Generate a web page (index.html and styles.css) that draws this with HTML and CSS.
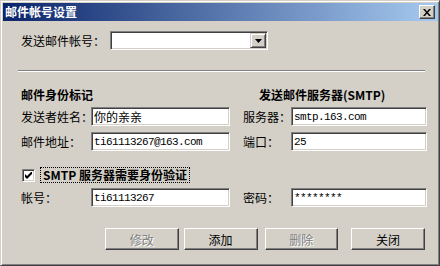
FILE: index.html
```html
<!DOCTYPE html>
<html lang="zh-CN">
<head>
    <meta charset="UTF-8">
    <title>邮件帐号设置</title>
    <link rel="stylesheet" href="styles.css">
</head>
<body>
    <div class="window">
        <!-- Title bar -->
        <div class="titlebar">
            <span class="title">邮件帐号设置</span>
            <button class="close-btn" type="button">
                <svg width="8" height="7" viewBox="0 0 8 7">
                    <path d="M0 0h2l2 2.5L6 0h2L5 3.5 8 7H6L4 4.5 2 7H0l3-3.5z" fill="#000"/>
                </svg>
            </button>
        </div>

        <div class="content">
            <div class="account-row">
                <label class="account-label">发送邮件帐号：</label>
                <div class="combo">
                    <div class="combo-text"></div>
                    <div class="combo-btn">
                        <svg width="7" height="4" viewBox="0 0 7 4"><path d="M0 0h7L3.5 4z" fill="#000"/></svg>
                    </div>
                </div>
            </div>

            <div class="separator"></div>

            <!-- Identity / SMTP server -->
            <div class="headings">
                <div class="heading heading-left">邮件身份标记</div>
                <div class="heading heading-right">发送邮件服务器(SMTP)</div>
            </div>

            <div class="row">
                <div class="field">
                    <label class="label-left">发送者姓名：</label>
                    <input class="input input-left cjk" type="text" value="你的亲亲">
                </div>
                <div class="field field-right">
                    <label class="label-right">服务器：</label>
                    <input class="input input-right" type="text" value="smtp.163.com">
                </div>
            </div>

            <div class="row">
                <div class="field">
                    <label class="label-left">邮件地址：</label>
                    <input class="input input-left" type="text" value="ti61113267@163.com">
                </div>
                <div class="field field-right">
                    <label class="label-right">端口：</label>
                    <input class="input input-right" type="text" value="25">
                </div>
            </div>

            <div class="check-row">
                <span class="checkbox">
                    <svg width="7" height="7" viewBox="0 0 7 7"><path d="M0 2v3l2 2 5-5V-1L2 4z" fill="#000"/></svg>
                </span>
                <span class="check-label">SMTP 服务器需要身份验证</span>
            </div>

            <div class="row row-auth">
                <div class="field">
                    <label class="label-left">帐号：</label>
                    <input class="input input-left" type="text" value="ti61113267">
                </div>
                <div class="field field-right">
                    <label class="label-right">密码：</label>
                    <input class="input input-right" type="text" value="********">
                </div>
            </div>

            <div class="buttons">
                <button class="button" type="button" disabled>修改</button>
                <button class="button" type="button">添加</button>
                <button class="button btn-del" type="button" disabled>删除</button>
                <button class="button btn-close" type="button">关闭</button>
            </div>
        </div>
    </div>
</body>
</html>
```

FILE: styles.css
```css
body {
    margin: 0;
    padding: 0;
    background: #d4d0c8;
    font-family: "Noto Sans CJK SC", "Liberation Sans", sans-serif;
    font-size: 12px;
    line-height: 16px;
    color: #000;
}

.window {
    width: 440px;
    height: 266px;
    box-sizing: border-box;
    background: #d4d0c8;
    border: 1px solid;
    border-color: #d4d0c8 #404040 #404040 #d4d0c8;
    box-shadow: inset 1px 1px #fff, inset -1px -1px #808080;
    padding: 2px 1px 2px 2px;
}

.titlebar {
    height: 18px;
    display: flex;
    align-items: center;
    justify-content: space-between;
    padding: 0 3px 0 2px;
    background: linear-gradient(to right, #0a246a, #a6caf0);
}

.title {
    color: #fff;
    font-weight: bold;
    font-size: 12px;
    line-height: 14px;
}

.close-btn {
    width: 16px;
    height: 14px;
    padding: 0;
    display: flex;
    align-items: center;
    justify-content: center;
    background: #d4d0c8;
    border: 1px solid;
    border-color: #fff #404040 #404040 #fff;
    box-shadow: inset -1px -1px #808080;
}

.content {
    padding: 10px 13px 0 15px;
}

.account-row {
    display: flex;
    align-items: center;
    padding-left: 3px;
}

label {
    flex-shrink: 0;
    white-space: nowrap;
}

.account-label {
    width: 89px;
}

.combo {
    width: 158px;
    height: 19px;
    box-sizing: border-box;
    display: flex;
    background: #fff;
    border: 1px solid;
    border-color: #808080 #fff #fff #808080;
    box-shadow: inset 1px 1px #404040, inset -1px -1px #d4d0c8;
    padding: 2px 1px 1px 2px;
}

.combo-text {
    flex: 1;
}

.combo-btn {
    width: 16px;
    height: 15px;
    margin-top: -1px;
    box-sizing: border-box;
    display: flex;
    align-items: center;
    justify-content: center;
    background: #d4d0c8;
    border: 1px solid;
    border-color: #d4d0c8 #404040 #404040 #d4d0c8;
    box-shadow: inset 1px 1px #fff, inset -1px -1px #808080;
}

.separator {
    margin-top: 20px;
    border-top: 1px solid #808080;
    border-bottom: 1px solid #fff;
}

.headings {
    display: flex;
    margin-top: 16px;
    padding-left: 3px;
    font-weight: bold;
    line-height: 14px;
}

.heading-left {
    width: 238px;
}

.row {
    display: flex;
    align-items: center;
    height: 19px;
    margin-top: 6px;
    padding-left: 3px;
}

.headings + .row {
    margin-top: 5px;
}

.row-auth {
    margin-top: 5px;
}

.field {
    display: flex;
    align-items: center;
}

.field-right {
    margin-left: 13px;
}

.label-left {
    width: 70px;
}

.label-right {
    width: 48px;
}

.input {
    height: 19px;
    box-sizing: border-box;
    margin: 0;
    padding: 0 2px;
    background: #fff;
    border: 1px solid;
    border-color: #808080 #fff #fff #808080;
    box-shadow: inset 1px 1px #404040, inset -1px -1px #d4d0c8;
    font-family: "Liberation Mono", "Noto Sans CJK SC", monospace;
    font-size: 11px;
    letter-spacing: -0.6px;
    color: #000;
    outline: none;
}

.input.cjk {
    font-family: "Noto Sans CJK SC", sans-serif;
    font-size: 12px;
    letter-spacing: 0;
}

.input-left {
    width: 139px;
}

.input-right {
    width: 136px;
}

.check-row {
    display: flex;
    align-items: center;
    margin-top: 16px;
    padding-left: 4px;
    height: 16px;
}

.checkbox {
    width: 13px;
    height: 13px;
    box-sizing: border-box;
    display: flex;
    align-items: center;
    justify-content: center;
    background: #fff;
    border: 1px solid;
    border-color: #808080 #fff #fff #808080;
    box-shadow: inset 1px 1px #404040, inset -1px -1px #d4d0c8;
}

.check-label {
    margin-left: 5px;
    padding: 0 2px;
    font-weight: bold;
    line-height: 14px;
    border: 1px dotted #000;
}

.buttons {
    display: flex;
    gap: 5px;
    margin-top: 21px;
    padding-left: 87px;
}

.button {
    width: 74px;
    height: 22px;
    padding: 0;
    background: #d4d0c8;
    border: 1px solid;
    border-color: #fff #404040 #404040 #fff;
    box-shadow: inset -1px -1px #808080;
    font-family: "Noto Sans CJK SC", sans-serif;
    font-size: 12px;
    color: #000;
}

.button:disabled {
    color: #808080;
    text-shadow: 1px 1px #fff;
}

.btn-del {
    margin-left: 2px;
}

.btn-close {
    margin-left: 8px;
}
```
